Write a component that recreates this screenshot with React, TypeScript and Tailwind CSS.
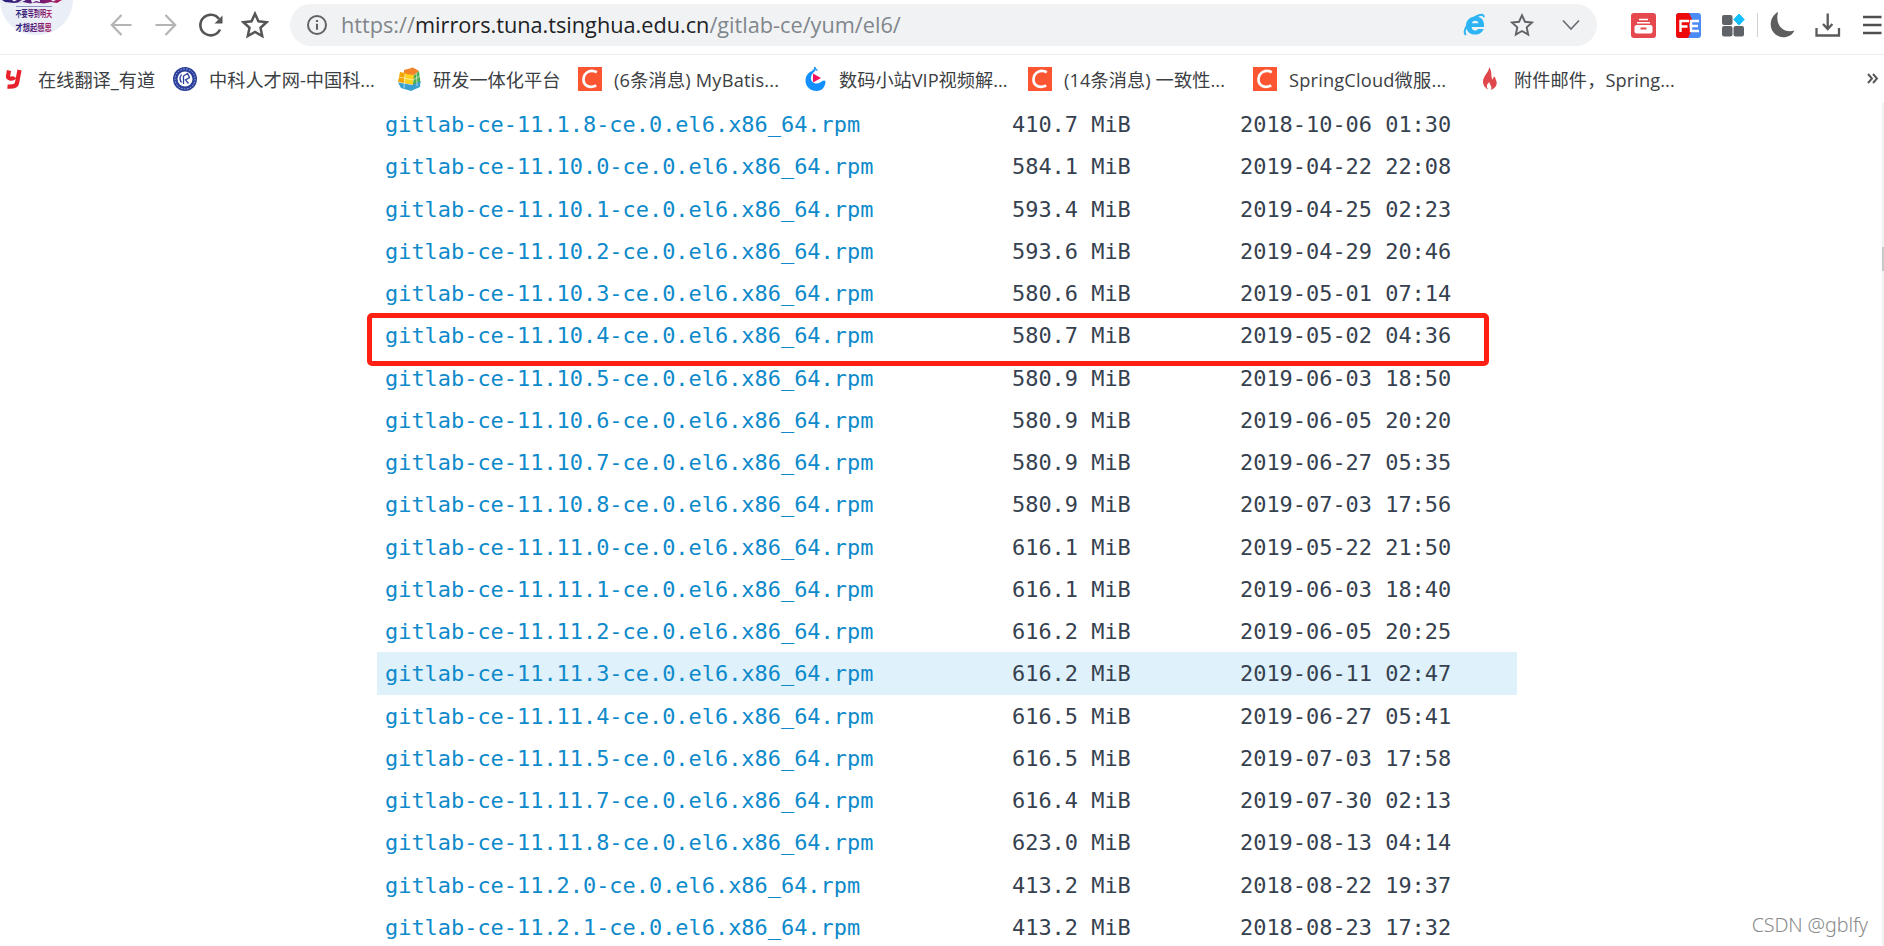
import { useState } from "react";
import type { ReactNode } from "react";

type FileEntry = { name: string; size: string; date: string };

const files: FileEntry[] = [
  { name: "gitlab-ce-11.1.8-ce.0.el6.x86_64.rpm", size: "410.7 MiB", date: "2018-10-06 01:30" },
  { name: "gitlab-ce-11.10.0-ce.0.el6.x86_64.rpm", size: "584.1 MiB", date: "2019-04-22 22:08" },
  { name: "gitlab-ce-11.10.1-ce.0.el6.x86_64.rpm", size: "593.4 MiB", date: "2019-04-25 02:23" },
  { name: "gitlab-ce-11.10.2-ce.0.el6.x86_64.rpm", size: "593.6 MiB", date: "2019-04-29 20:46" },
  { name: "gitlab-ce-11.10.3-ce.0.el6.x86_64.rpm", size: "580.6 MiB", date: "2019-05-01 07:14" },
  { name: "gitlab-ce-11.10.4-ce.0.el6.x86_64.rpm", size: "580.7 MiB", date: "2019-05-02 04:36" },
  { name: "gitlab-ce-11.10.5-ce.0.el6.x86_64.rpm", size: "580.9 MiB", date: "2019-06-03 18:50" },
  { name: "gitlab-ce-11.10.6-ce.0.el6.x86_64.rpm", size: "580.9 MiB", date: "2019-06-05 20:20" },
  { name: "gitlab-ce-11.10.7-ce.0.el6.x86_64.rpm", size: "580.9 MiB", date: "2019-06-27 05:35" },
  { name: "gitlab-ce-11.10.8-ce.0.el6.x86_64.rpm", size: "580.9 MiB", date: "2019-07-03 17:56" },
  { name: "gitlab-ce-11.11.0-ce.0.el6.x86_64.rpm", size: "616.1 MiB", date: "2019-05-22 21:50" },
  { name: "gitlab-ce-11.11.1-ce.0.el6.x86_64.rpm", size: "616.1 MiB", date: "2019-06-03 18:40" },
  { name: "gitlab-ce-11.11.2-ce.0.el6.x86_64.rpm", size: "616.2 MiB", date: "2019-06-05 20:25" },
  { name: "gitlab-ce-11.11.3-ce.0.el6.x86_64.rpm", size: "616.2 MiB", date: "2019-06-11 02:47" },
  { name: "gitlab-ce-11.11.4-ce.0.el6.x86_64.rpm", size: "616.5 MiB", date: "2019-06-27 05:41" },
  { name: "gitlab-ce-11.11.5-ce.0.el6.x86_64.rpm", size: "616.5 MiB", date: "2019-07-03 17:58" },
  { name: "gitlab-ce-11.11.7-ce.0.el6.x86_64.rpm", size: "616.4 MiB", date: "2019-07-30 02:13" },
  { name: "gitlab-ce-11.11.8-ce.0.el6.x86_64.rpm", size: "623.0 MiB", date: "2019-08-13 04:14" },
  { name: "gitlab-ce-11.2.0-ce.0.el6.x86_64.rpm", size: "413.2 MiB", date: "2018-08-22 19:37" },
  { name: "gitlab-ce-11.2.1-ce.0.el6.x86_64.rpm", size: "413.2 MiB", date: "2018-08-23 17:32" },
];

const MARKED_FILE = "gitlab-ce-11.10.4-ce.0.el6.x86_64.rpm";

export default function App() {
  return (
    <div className="relative flex h-[946px] w-[1884px] flex-col overflow-hidden bg-white">
      <Toolbar />
      <BookmarksBar />
      <div className="flex min-h-0 flex-1">
        <FileList />
        <div className="w-[2px] bg-[#f1f1f1] pt-[144px]">
          <div className="h-6 bg-[#c8c8c8]" />
        </div>
      </div>
      <span className="absolute right-[16px] bottom-[7px] font-['Noto_Sans','Open_Sans',sans-serif] text-[19.7px] leading-[28px] font-light tracking-[-0.1px] text-[#8a8a8a]">
        CSDN @gblfy
      </span>
    </div>
  );
}

function Toolbar() {
  return (
    <div className="flex h-[55px] shrink-0 items-start border-b border-[#ececee]">
      <Avatar />
      <div className="flex h-[50px] w-[217px] items-center pl-[37px]">
        <ArrowIcon className="h-[22px] w-[22px]" />
        <ArrowIcon className="ml-[23px] h-[22px] w-[22px] rotate-180" />
        <svg viewBox="0 0 26 26" className="ml-[21px] h-[26px] w-[26px]">
          <path d="M22 17.5A10.3 10.3 0 1 1 21 7" fill="none" stroke="#555" strokeWidth="2.6" />
          <path d="M24.5 3.5v8h-8z" fill="#555" />
        </svg>
        <StarIcon className="ml-[17px] h-[28px] w-[28px]" color="#555" strokeWidth={2.3} />
      </div>
      <AddressBar />
      <Extensions />
    </div>
  );
}

function Avatar() {
  return (
    <div className="h-[35px] w-[73px] rounded-b-full bg-[#e9eef7]">
      <svg viewBox="0 0 73 35" className="h-[35px] w-[73px]">
        <defs>
          <linearGradient id="ink" x1="0" x2="1">
            <stop offset="0" stopColor="#22207c" />
            <stop offset="0.6" stopColor="#6a1c76" />
            <stop offset="1" stopColor="#b3205f" />
          </linearGradient>
        </defs>
        <path
          d="M2 0h10l2 1.500 3-1.500h5l-4 2.500h3l5-2.500h5l1 3 4-2 4 1V0h11l2 1.500 3-1.500h6l-5 3-6-1-7 1.500-8-1-6 1-7-1.500-9 1-9-1z"
          fill="url(#ink)"
        />
        <path d="M16 6.500h36" stroke="#8d8fc4" strokeWidth="1" />
        <g fill="url(#ink)" fontFamily="'Noto Sans CJK SC', sans-serif" fontWeight="700">
          <text transform="translate(15.500 17) scale(.68 1)" fontSize="9">
            不要等到明天
          </text>
          <text transform="translate(15.500 30.500) scale(.78 1)" fontSize="9.300">
            才想起感恩
          </text>
        </g>
      </svg>
    </div>
  );
}

function AddressBar() {
  const [url] = useState({ scheme: "https://", host: "mirrors.tuna.tsinghua.edu.cn", path: "/gitlab-ce/yum/el6/" });

  return (
    <div className="mt-1 flex h-[42px] w-[1307px] items-center rounded-full bg-[#f1f2f4] pl-4">
      <svg viewBox="0 0 22 22" className="h-[22px] w-[22px]">
        <circle cx="11" cy="11" r="9" fill="none" stroke="#5f6368" strokeWidth="2" />
        <path d="M11 9.700v6M11 6v2.100" stroke="#5f6368" strokeWidth="2.100" />
      </svg>
      <span className="ml-[13px] w-[580px] font-['Open_Sans','Noto_Sans',sans-serif] text-[21.7px] leading-[30px] whitespace-nowrap text-[#80868b]">
        {url.scheme}
        <span className="text-[#202124]">{url.host}</span>
        {url.path}
      </span>
      <div className="ml-auto flex items-center pr-[17px]">
        <BrowserModeIcon />
        <StarIcon className="ml-[24px] h-6 w-6" color="#5f6368" strokeWidth={2.1} />
        <svg viewBox="0 0 18 12" className="ml-[28px] h-3 w-[18px]">
          <path d="M1 1.500l8 8.500 8-8.500" fill="none" stroke="#6b6f74" strokeWidth="1.700" />
        </svg>
      </div>
    </div>
  );
}

function BrowserModeIcon() {
  return (
    <svg viewBox="0 0 24 24" className="h-6 w-6">
      <path
        d="M5.500 14h16.500c.8-6.500-3-10.500-8.500-10.500-5.500 0-9.500 4-9.500 9.200 0 5.300 3.800 8.800 9.100 8.800 4.200 0 7.300-2 8.500-5.500h-5.600c-.8 1-1.700 1.500-3 1.500-2 0-3.200-1.300-3.300-3.500zm4.300-3.700c.4-1.700 1.600-2.600 3.400-2.600s3.100.9 3.300 2.600z"
        fill="#2cb4f4"
        fillRule="evenodd"
      />
      <path d="M4 22C-.5 18 8 5.500 17 2.200c3.200-1.100 4.900-.5 4.800 2" fill="none" stroke="#2cb4f4" strokeWidth="2" />
    </svg>
  );
}

function Extensions() {
  return (
    <div className="flex h-[50px] items-center">
      <svg viewBox="0 0 25 25" className="ml-[34px] h-[25px] w-[25px]">
        <rect width="25" height="25" rx="3" fill="#e5484d" />
        <path d="M8 6.500h9M6 9.700h13" stroke="#fff" strokeWidth="1.600" />
        <rect x="3.500" y="12" width="18" height="8.500" rx="2" fill="#fff" />
        <path d="M9.500 15.500h6" stroke="#e5484d" strokeWidth="2" />
      </svg>
      <svg viewBox="0 0 25 25" className="ml-5 h-[25px] w-[25px]">
        <rect width="25" height="25" rx="3" fill="#4b8bf5" />
        <path d="M3 0h10l3 6-3 6 2 7-3 6H3a3 3 0 0 1-3-3V3a3 3 0 0 1 3-3z" fill="#ee0a0a" />
        <path d="M4.500 19V8h8.500M4.500 13.500h7M23 8h-8v10h8M15 13h7" fill="none" stroke="#fff" strokeWidth="2.400" />
      </svg>
      <svg viewBox="0 0 24 26" className="ml-[21px] h-[26px] w-6">
        <rect x="0" y="3" width="10.500" height="10" rx="2" fill="#5f6368" />
        <rect x="0" y="14" width="10.500" height="10.500" rx="2" fill="#5f6368" />
        <rect x="11.500" y="14" width="10.500" height="10.500" rx="2" fill="#5f6368" />
        <path d="M17 2l5.200 5.500L17 13l-5.200-5.500z" fill="#12c0ff" stroke="#12c0ff" strokeLinejoin="round" />
      </svg>
      <div className="ml-[11px] h-6 w-px bg-[#cfd1d4]" />
      <svg viewBox="0 0 26 26" className="ml-[12px] h-[26px] w-[26px]">
        <path d="M8 0C-1 5-1.500 17 5.500 22.500c6 4.700 15.500 3.500 19-4C15 21.500 4.500 15 8 0z" fill="#5e5e5e" />
      </svg>
      <svg viewBox="0 0 26 26" className="ml-[19px] h-[26px] w-[26px]">
        <path d="M1.500 16v7.500h22.500V16M12.700 1.500v15M8 12l4.700 5 4.700-5" fill="none" stroke="#5a5a5a" strokeWidth="2.300" />
      </svg>
      <svg viewBox="0 0 20 22" className="ml-[22px] h-[22px] w-5">
        <path d="M0 3h18.500M0 11h18.500M0 19h18.500" stroke="#4f4f4f" strokeWidth="2.600" />
      </svg>
    </div>
  );
}

function BookmarksBar() {
  return (
    <div className="flex h-12 shrink-0 items-center pl-[2px] font-['Open_Sans','Noto_Sans_CJK_SC',sans-serif] text-[18.200px] leading-6 text-[#3c4043]">
      <Bookmark className="w-[171px]" icon={<YoudaoIcon />} label="在线翻译_有道" />
      <Bookmark className="w-[224px]" icon={<SealIcon />} label="中科人才网-中国科..." />
      <Bookmark className="w-[181px]" icon={<CubeIcon />} label="研发一体化平台" />
      <Bookmark className="w-[225px] tracking-[0.2px]" icon={<CsdnIcon />} label="(6条消息) MyBatis..." />
      <Bookmark className="w-[225px]" icon={<WhaleIcon />} label="数码小站VIP视频解..." />
      <Bookmark className="w-[225px] tracking-[0.1px]" icon={<CsdnIcon />} label="(14条消息) 一致性..." />
      <Bookmark className="w-[225px] tracking-[0.2px]" icon={<CsdnIcon />} label="SpringCloud微服..." />
      <Bookmark className="w-[225px] tracking-[0.1px]" icon={<FlameIcon />} label="附件邮件，Spring..." />
      <svg viewBox="0 0 12 12" className="mr-[5px] ml-auto h-3 w-3">
        <path d="M1 1l4 4.500-4 4.500M6 1l4 4.500-4 4.500" fill="none" stroke="#555" strokeWidth="1.900" />
      </svg>
    </div>
  );
}

function Bookmark({ icon, label, className }: { icon: ReactNode; label: string; className: string }) {
  return (
    <div className={`flex shrink-0 items-center gap-3 whitespace-nowrap ${className}`}>
      {icon}
      <span className="pt-[2px]">{label}</span>
    </div>
  );
}

function FileList() {
  const [hovered, setHovered] = useState("gitlab-ce-11.11.3-ce.0.el6.x86_64.rpm");

  return (
    <div className="flex-1 overflow-hidden pl-[377px] font-['DejaVu_Sans_Mono',monospace] text-[21.930px] leading-[42.250px]">
      {files.map((file) => (
        <div
          key={file.name}
          onMouseEnter={() => setHovered(file.name)}
          className={`relative grid h-[42.25px] w-[1140px] grid-cols-[627px_228px_1fr] pt-px pl-[8px] text-[#36414f] ${
            hovered === file.name ? "bg-[#dff1fb]" : ""
          }`}
        >
          <a className="text-[#0e8acb]">{file.name}</a>
          <span>{file.size}</span>
          <span>{file.date}</span>
          {file.name === MARKED_FILE && (
            <div className="absolute -top-px -left-[10px] h-[53px] w-[1122px] rounded-[5px] border-[5px] border-[#ff1f13]" />
          )}
        </div>
      ))}
    </div>
  );
}

function ArrowIcon({ className }: { className: string }) {
  return (
    <svg viewBox="0 0 22 22" className={className}>
      <path d="M21.500 11H2M11.500 1L1.800 11l9.700 10" fill="none" stroke="#b4b4b4" strokeWidth="2.200" />
    </svg>
  );
}

function StarIcon({ className, color, strokeWidth }: { className: string; color: string; strokeWidth: number }) {
  return (
    <svg viewBox="0 0 26 26" className={className}>
      <path
        d="M13 2.500l3.200 7 7.600.9-5.700 5.200 1.600 7.700L13 19.500l-6.700 3.800 1.600-7.700-5.700-5.200 7.600-.9z"
        fill="none"
        stroke={color}
        strokeWidth={strokeWidth}
      />
    </svg>
  );
}

function YoudaoIcon() {
  return (
    <svg viewBox="0 0 24 24" className="h-6 w-6">
      <path d="M7 3.500L6 9c-.3 3 5 3.600 6.500 1M17.500 3L15 16c-.6 3.500-4.200 4-9.500 3.600" fill="none" stroke="#e8222d" strokeWidth="4.200" />
    </svg>
  );
}

function SealIcon() {
  return (
    <svg viewBox="0 0 24 24" className="h-6 w-6">
      <circle cx="12" cy="12" r="12" fill="#2b3f9b" />
      <circle cx="12" cy="12" r="10" fill="none" stroke="#aab3dc" strokeWidth="1" strokeDasharray="1.500 1.500" />
      <circle cx="12" cy="12" r="7.500" fill="#fff" />
      <path d="M10.500 17V9l4-2.500 2 4-4 2.500 3 3.500M8.500 7.500c-2 3-2 5.500 0 8" fill="none" stroke="#2b3f9b" strokeWidth="1.300" />
    </svg>
  );
}

function CubeIcon() {
  return (
    <svg viewBox="0 0 24 24" className="h-6 w-6">
      <path d="M7 3l9-2.500L22 4l-5 4-10-1z" fill="#f5832a" />
      <path d="M3 5l5 1 9 2-1.500 9.500L1 15z" fill="#f0a500" />
      <path d="M8 7l9 1.500-1.500 9L7 16z" fill="#ffd21e" />
      <path d="M17 8.500L22 4l1.500 12-8 4.500z" fill="#4fae52" />
      <path d="M1 15.500l14.500 2.500 8-4-.5 6-9 4-10-3z" fill="#3aa0d0" />
      <path d="M8 6.500L7 21M2 10l14 3 7-4M19.500 6.500L20 19" fill="none" stroke="#fff" strokeWidth=".8" opacity=".7" />
    </svg>
  );
}

function CsdnIcon() {
  return (
    <svg viewBox="0 0 24 24" className="h-6 w-6">
      <rect width="24" height="24" fill="#fc5531" />
      <path d="M18.800 5.200C12.500 1.800 6 5.500 5.500 12c-.3 6.700 6 9.700 12.700 6.500" fill="none" stroke="#fff" strokeWidth="2.700" />
    </svg>
  );
}

function WhaleIcon() {
  return (
    <svg viewBox="0 0 24 24" className="h-6 w-6">
      <path d="M9.500 3.500c2.500-.3 2.200-1 2.200-3.500.3 2 .8 2.600 2.800 3.500" fill="none" stroke="#2196f3" strokeWidth="1.500" />
      <path
        d="M13 3.500C7 3 2.500 8 2.500 13.500 2.500 20 8 24 13.500 24 19 24 22.500 20 22.500 14c-3-2-4.500 2-8.500 2.500C8 17 4.500 9 13 3.500z"
        fill="#1290ff"
      />
      <path d="M10 6.500l8 4.500-8 4.500z" fill="#f5135f" />
    </svg>
  );
}

function FlameIcon() {
  return (
    <svg viewBox="0 0 24 24" className="h-6 w-6">
      <path
        d="M11 0c.8 4-6 9-6 14.500 0 4 2.500 6.500 5 8-2-3.500-1-5.500 1.500-7.500 0 3 3 4 1.500 8 4-1.500 6.500-5 5.500-8.500-.5-2-1.500-3-1.500-5-2 1-2.500 2.500-2.500 3.500C12.500 9 14.500 4 11 0z"
        fill="#e0474c"
      />
    </svg>
  );
}
